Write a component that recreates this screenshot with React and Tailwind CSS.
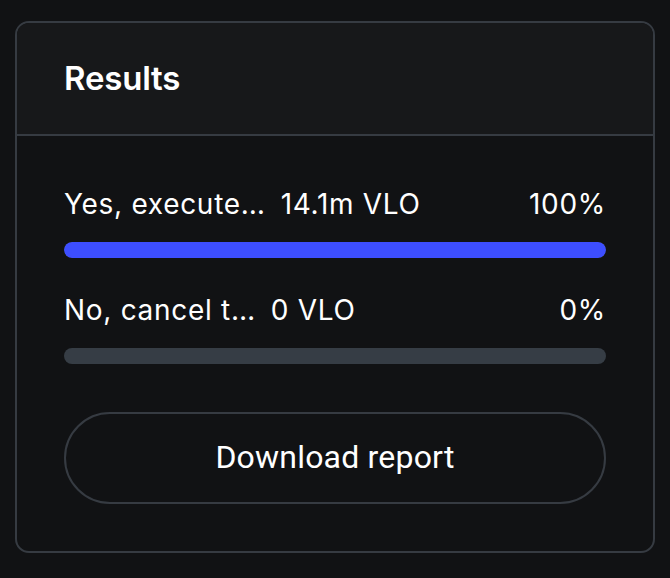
export default function App() {
  return (
    <div className="min-h-[578px] bg-[#111214] pt-[21px] pl-[15px] pr-[15px] pb-[25px]" style={{ fontFamily: "Inter, 'Noto Sans', sans-serif" }}>
      <div className="w-[640px] h-[532px] border-2 border-[#363b42] rounded-[14px] overflow-hidden flex flex-col bg-[#111214]">
        <div className="h-[113px] shrink-0 bg-[#17181a] border-b-2 border-[#363b42] flex items-center px-[47px]">
          <h2 className="text-[33px] font-semibold text-white tracking-[-0.2px]">Results</h2>
        </div>
        <div className="flex flex-col px-[47px] pt-[51px]">
          <div className="flex items-center justify-between text-[28px] tracking-[0.7px] text-white leading-[34px]">
            <div className="flex items-center gap-[15px]">
              <span>Yes, execute…</span>
              <span>14.1m VLO</span>
            </div>
            <span>100%</span>
          </div>
          <div className="mt-[21px] h-[16px] rounded-full bg-[#363d45] overflow-hidden">
            <div className="h-full rounded-full bg-[#3d4eff]" style={{ width: "100%" }} />
          </div>
          <div className="mt-[35px] flex items-center justify-between text-[28px] tracking-[0.7px] text-white leading-[34px]">
            <div className="flex items-center gap-[15px]">
              <span>No, cancel t…</span>
              <span>0 VLO</span>
            </div>
            <span>0%</span>
          </div>
          <div className="mt-[21px] h-[16px] rounded-full bg-[#363d45] overflow-hidden">
            <div className="h-full rounded-full bg-[#3d4eff]" style={{ width: "0%" }} />
          </div>
          <button className="mt-[48px] h-[92px] w-full rounded-full border-2 border-[#363b42] text-white text-[32px] font-[450] tracking-[0.2px] pb-[3px]" style={{ fontFamily: "Roboto, sans-serif" }}>
            Download report
          </button>
        </div>
      </div>
    </div>
  );
}
